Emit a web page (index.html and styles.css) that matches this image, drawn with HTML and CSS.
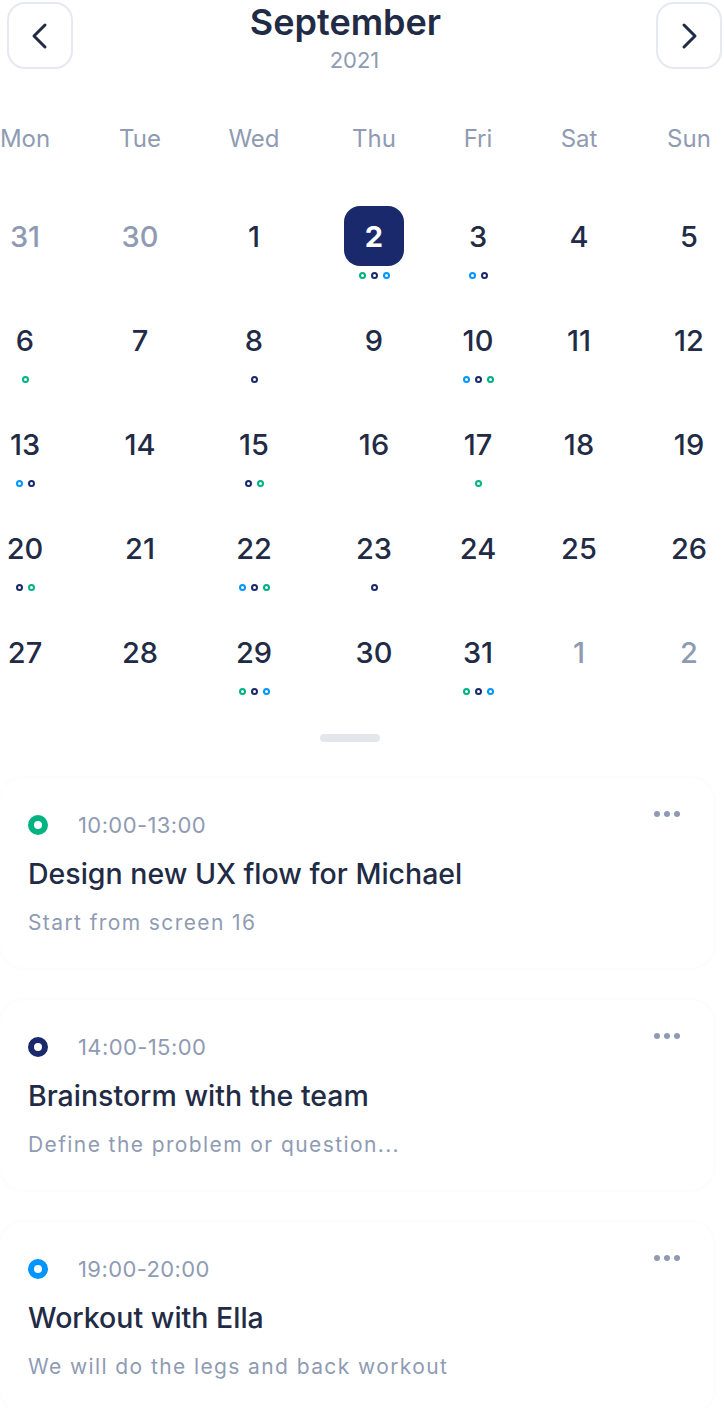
FILE: index.html
```html
<!DOCTYPE html>
<html>
<head>
  <title>Calendar</title>
  <link rel="stylesheet" href="styles.css">
</head>
<body>
  <div class="screen">
    <header class="month-bar">
      <button class="nav-btn" type="button">
        <svg width="20" height="28" viewBox="0 0 20 28"><path d="M15 3 L4 14 L15 25" fill="none" stroke="#222b45" stroke-width="3" stroke-linecap="round" stroke-linejoin="round"/></svg>
      </button>
      <div class="month-title">
        <h1>September</h1>
        <span class="year">2021</span>
      </div>
      <button class="nav-btn" type="button">
        <svg width="20" height="28" viewBox="0 0 20 28"><path d="M5 3 L16 14 L5 25" fill="none" stroke="#222b45" stroke-width="3" stroke-linecap="round" stroke-linejoin="round"/></svg>
      </button>
    </header>

    <div class="calendar" id="calendar">
      <div class="weekday">Mon</div>
      <div class="weekday">Tue</div>
      <div class="weekday">Wed</div>
      <div class="weekday">Thu</div>
      <div class="weekday">Fri</div>
      <div class="weekday">Sat</div>
      <div class="weekday">Sun</div>
    </div>

    <div class="handle"></div>

    <div class="events">
      <div class="event">
        <div class="event-head">
          <span class="ring green"></span>
          <span class="event-time">10:00-13:00</span>
          <span class="more"><i></i><i></i><i></i></span>
        </div>
        <div class="event-title">Design new UX flow for Michael</div>
        <div class="event-note">Start from screen 16</div>
      </div>

      <div class="event">
        <div class="event-head">
          <span class="ring navy"></span>
          <span class="event-time">14:00-15:00</span>
          <span class="more"><i></i><i></i><i></i></span>
        </div>
        <div class="event-title">Brainstorm with the team</div>
        <div class="event-note">Define the problem or question...</div>
      </div>

      <div class="event">
        <div class="event-head">
          <span class="ring blue"></span>
          <span class="event-time">19:00-20:00</span>
          <span class="more"><i></i><i></i><i></i></span>
        </div>
        <div class="event-title">Workout with Ella</div>
        <div class="event-note">We will do the legs and back workout</div>
      </div>
    </div>
  </div>

  <script>
    // g = green, n = navy, b = blue
    var days = [
      [31, "muted"], [30, "muted"], [1], [2, "today", "gnb"], [3, "", "bn"], [4], [5],
      [6, "", "g"], [7], [8, "", "n"], [9], [10, "", "bng"], [11], [12],
      [13, "", "bn"], [14], [15, "", "ng"], [16], [17, "", "g"], [18], [19],
      [20, "", "ng"], [21], [22, "", "bng"], [23, "", "n"], [24], [25], [26],
      [27], [28], [29, "", "gnb"], [30], [31, "", "gnb"], [1, "muted"], [2, "muted"]
    ];
    var names = { g: "green", n: "navy", b: "blue" };
    var calendar = document.getElementById("calendar");

    for (var i = 0; i < days.length; i++) {
      var cell = document.createElement("div");
      cell.className = "day " + (days[i][1] || "");

      var num = document.createElement("span");
      num.className = "num";
      num.innerHTML = days[i][0];
      cell.appendChild(num);

      var dots = document.createElement("span");
      dots.className = "dots";
      var marks = days[i][2] || "";
      for (var j = 0; j < marks.length; j++) {
        var dot = document.createElement("i");
        dot.className = "dot " + names[marks[j]];
        dots.appendChild(dot);
      }
      cell.appendChild(dots);
      calendar.appendChild(cell);
    }
  </script>
</body>
</html>
```

FILE: styles.css
```css
body {
  margin: 0;
  background-color: #fff;
  font-family: Inter, "Noto Sans", sans-serif;
  color: #222b45;
}

.screen {
  width: 724px;
  overflow: hidden;
}

/* Month header */
.month-bar {
  display: flex;
  align-items: flex-start;
  height: 67px;
  padding: 2px 2px 0 7px;
}

.nav-btn {
  width: 66px;
  height: 67px;
  display: flex;
  align-items: center;
  justify-content: center;
  padding: 0;
  background-color: #fff;
  border: 2px solid #e6e9f0;
  border-radius: 18px;
  cursor: pointer;
}

.month-title {
  flex: 1;
  display: flex;
  flex-direction: column;
  align-items: center;
  padding-right: 38px;
}

.month-title h1 {
  margin: 0;
  font-size: 36px;
  line-height: 40px;
  font-weight: 600;
  color: #222b45;
}

.year {
  margin-top: 5px;
  padding-left: 18px;
  font-size: 22px;
  line-height: 26px;
  color: #8f9bb3;
}

/* Calendar grid */
.calendar {
  display: grid;
  grid-template-columns: 50px 72px 48px 84px 16px 78px 34px;
  column-gap: 54px;
  margin-top: 56px;
}

.weekday {
  display: flex;
  justify-content: center;
  font-size: 24px;
  line-height: 28px;
  color: #8f9bb3;
  padding-bottom: 53px;
}

.day {
  height: 104px;
  display: flex;
  flex-direction: column;
  align-items: center;
}

.day .num {
  flex: none;
  width: 60px;
  height: 60px;
  display: flex;
  align-items: center;
  justify-content: center;
  font-size: 29px;
  font-weight: 500;
  color: #222b45;
  border-radius: 16px;
}

.day.muted .num {
  color: #8f9bb3;
}

.day.today .num {
  background-color: #19296b;
  color: #fff;
  font-weight: 700;
}

.dots {
  display: flex;
  gap: 5px;
  margin-top: 6px;
}

.dot {
  width: 7px;
  height: 7px;
  box-sizing: border-box;
  border: 2px solid;
  border-radius: 50%;
}

.handle {
  width: 60px;
  height: 8px;
  margin: 8px 0 0 320px;
  background-color: #e4e6ec;
  border-radius: 4px;
}

/* Event cards */
.events {
  display: flex;
  flex-direction: column;
  gap: 32px;
  margin-top: 36px;
  padding-right: 10px;
}

.event {
  padding: 36px 28px 32px 28px;
  background-color: #fff;
  border-radius: 24px;
  box-shadow: 0 0 4px rgba(143, 155, 179, 0.07);
}

.event-head {
  display: flex;
  align-items: center;
  height: 22px;
}

.ring {
  width: 20px;
  height: 20px;
  box-sizing: border-box;
  border: 6px solid;
  border-radius: 50%;
}

.event-time {
  margin-left: 30px;
  font-size: 22px;
  letter-spacing: 0.4px;
  color: #8f9bb3;
}

.more {
  display: flex;
  gap: 4px;
  margin-left: auto;
  margin-right: 6px;
  align-self: flex-start;
  margin-top: -3px;
}

.more i {
  width: 6px;
  height: 6px;
  border-radius: 50%;
  background-color: #8f9bb3;
}

.event-title {
  margin-top: 21px;
  font-size: 28.5px;
  line-height: 34px;
  font-weight: 500;
  color: #222b45;
}

.event-note {
  margin-top: 19px;
  font-size: 21px;
  line-height: 26px;
  letter-spacing: 1.4px;
  color: #8f9bb3;
}

/* Event colours */
.green { border-color: #00b383; }
.navy { border-color: #19296b; }
.blue { border-color: #0095ff; }
```
